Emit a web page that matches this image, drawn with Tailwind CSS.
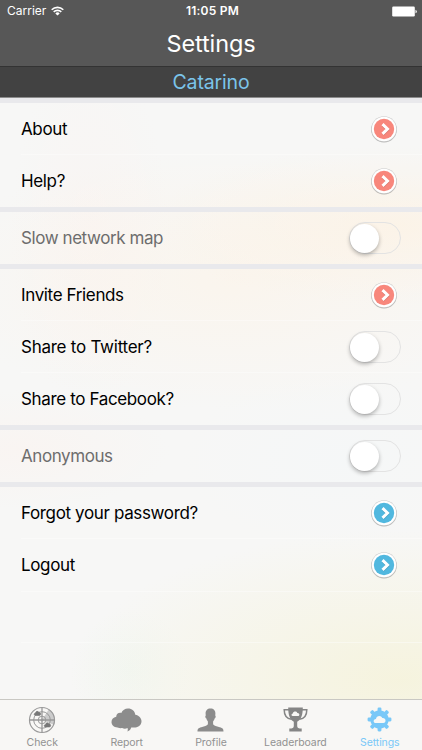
<!DOCTYPE html>
<html lang="en">
<head>
<meta charset="utf-8">
<title>Settings</title>
<script src="https://cdn.jsdelivr.net/npm/@tailwindcss/browser@4"></script>
</head>
<body class="w-[422px] h-[750px] overflow-hidden font-['Inter','Liberation_Sans',sans-serif] text-black">
<svg class="hidden">
  <symbol id="go" viewBox="0 0 28 28">
    <circle cx="14" cy="14.7" r="12.8" fill="#000" opacity=".25"/>
    <circle cx="14" cy="14" r="12.8" fill="#ccc"/>
    <circle cx="14" cy="14" r="12.2" fill="#fff"/>
    <circle cx="14" cy="14" r="10.2" fill="currentColor"/>
    <path d="M12.500 9.400l4.900 4.600-4.900 4.600" transform="translate(.3 .8)" fill="none" stroke="#000" stroke-opacity=".15" stroke-width="3"/>
    <path d="M12.500 9.200l5 4.800-5 4.800" fill="none" stroke="#fff" stroke-width="3"/>
  </symbol>
</svg>
<div class="flex h-full flex-col bg-[#f7f7f6] bg-[radial-gradient(ellipse_250px_80px_at_400px_225px,rgba(255,240,220,.5),transparent),radial-gradient(ellipse_300px_130px_at_230px_280px,rgba(253,243,230,.55),transparent),radial-gradient(ellipse_80px_180px_at_90px_230px,rgba(255,238,234,.25),transparent),radial-gradient(ellipse_150px_60px_at_20px_450px,rgba(253,240,234,.35),transparent),radial-gradient(ellipse_160px_90px_at_340px_460px,rgba(243,247,249,.5),transparent),radial-gradient(ellipse_330px_150px_at_400px_680px,rgba(245,242,214,.75),transparent),radial-gradient(ellipse_60px_60px_at_130px_670px,rgba(237,246,240,.5),transparent)]">
  <header class="h-[66px] shrink-0 bg-[#575757] text-white">
    <div class="grid h-[22px] grid-cols-3 items-center pl-[7px] pr-[5px]">
      <div class="flex items-center gap-[5px] text-[12px]">
        <span>Carrier</span>
        <svg class="h-[10px] w-[13px]" viewBox="0 0 13 10" fill="none" stroke="#fff" stroke-width="1.6"><path d="M.7 3.700a8.300 8.300 0 0 1 11.600 0M2.700 5.900a5.400 5.400 0 0 1 7.600 0"/><path d="M6.500 9.500L4.300 7.400a3.100 3.100 0 0 1 4.400 0z" fill="#fff" stroke="none"/></svg>
      </div>
      <div class="pl-px text-center text-[12px] font-semibold tracking-[.2px]">11:05 PM</div>
      <svg class="h-[11px] w-[25px] justify-self-end" viewBox="0 0 25 11" fill="#fff"><rect x=".2" y=".5" width="22.600" height="10" rx="1.200"/><path d="M23.500 3.700q1.300.4 1.300 1.800t-1.300 1.800z"/></svg>
    </div>
    <h1 class="pt-px text-center text-[23.5px] leading-[42px] tracking-[-.1px]">Settings</h1>
  </header>
  <div class="h-[32px] shrink-0 border-t border-b border-t-[#333] border-b-[#8c8c8c] bg-[#424242] text-center text-[19.500px] leading-[31px] tracking-[-.15px] text-[#7bc4ea]">Catarino</div>
  <main class="flex flex-1 flex-col text-[17px] tracking-[-.36px]">
    <div class="h-[5px] shrink-0 bg-[#e9e9ec]"></div>
    <section>
      <div class="flex h-[52px] items-center justify-between pl-[21px] pr-[24px]"><span class="pt-[2px]">About</span><svg class="size-7 text-[#f8877c]"><use href="#go"/></svg></div>
      <div class="ml-[21px] flex h-[52px] items-center justify-between pr-[24px] shadow-[0_-1px_0_rgba(255,255,255,.35)]"><span class="pt-[2px]">Help?</span><svg class="size-7 text-[#f8877c]"><use href="#go"/></svg></div>
    </section>
    <div class="h-[5px] shrink-0 bg-[#e9e9ec]"></div>
    <section>
      <div class="flex h-[52px] items-center justify-between pl-[21px] pr-[21px] text-[#6d6d6d]"><span class="pt-[2px] tracking-[-.42px]">Slow network map</span><span class="flex h-[32px] w-[52px] items-center rounded-full border-[1.5px] border-[#e3e3e3]"><span class="size-[29px] rounded-full bg-white shadow-[0_2px_4px_rgba(0,0,0,.3)]"></span></span></div>
    </section>
    <div class="h-[5px] shrink-0 bg-[#e9e9ec]"></div>
    <section>
      <div class="flex h-[52px] items-center justify-between pl-[21px] pr-[24px]"><span class="pt-[2px]">Invite Friends</span><svg class="size-7 text-[#f8877c]"><use href="#go"/></svg></div>
      <div class="ml-[21px] flex h-[52px] items-center justify-between pr-[21px] shadow-[0_-1px_0_rgba(255,255,255,.35)]"><span class="pt-[2px] tracking-[-.25px]">Share to Twitter?</span><span class="flex h-[32px] w-[52px] items-center rounded-full border-[1.5px] border-[#e3e3e3]"><span class="size-[29px] rounded-full bg-white shadow-[0_2px_4px_rgba(0,0,0,.3)]"></span></span></div>
      <div class="ml-[21px] flex h-[52px] items-center justify-between pr-[21px] shadow-[0_-1px_0_rgba(255,255,255,.35)]"><span class="pt-[2px]">Share to Facebook?</span><span class="flex h-[32px] w-[52px] items-center rounded-full border-[1.5px] border-[#e3e3e3]"><span class="size-[29px] rounded-full bg-white shadow-[0_2px_4px_rgba(0,0,0,.3)]"></span></span></div>
    </section>
    <div class="h-[5px] shrink-0 bg-[#e9e9ec]"></div>
    <section>
      <div class="flex h-[52px] items-center justify-between pl-[21px] pr-[21px] text-[#6d6d6d]"><span class="pt-[2px] tracking-[-.42px]">Anonymous</span><span class="flex h-[32px] w-[52px] items-center rounded-full border-[1.5px] border-[#e3e3e3]"><span class="size-[29px] rounded-full bg-white shadow-[0_2px_4px_rgba(0,0,0,.3)]"></span></span></div>
    </section>
    <div class="h-[5px] shrink-0 bg-[#e9e9ec]"></div>
    <section>
      <div class="flex h-[52px] items-center justify-between pl-[21px] pr-[24px]"><span class="pt-[2px]">Forgot your password?</span><svg class="size-7 text-[#51b8df]"><use href="#go"/></svg></div>
      <div class="ml-[21px] flex h-[52px] items-center justify-between pr-[24px] shadow-[0_-1px_0_rgba(255,255,255,.35)]"><span class="pt-[2px]">Logout</span><svg class="size-7 text-[#51b8df]"><use href="#go"/></svg></div>
      <div class="ml-[21px] h-[52px] border-y border-white/40"></div>
    </section>
  </main>
  <nav class="grid h-[51px] shrink-0 grid-cols-5 border-t border-[#c9c8c3] bg-[#f8f7f5] text-[10.5px] tracking-[-.1px] text-[#929292]">
    <div class="flex flex-col items-center">
      <svg class="mt-[6px] mb-px h-[28px] w-[28px]" viewBox="0 0 28 28" fill="none" stroke="#999">
        <path d="M14 14L21 3A13 13 0 0 1 26 19z" fill="#ccc" stroke="none"/>
        <circle cx="14" cy="14" r="12.500" stroke-width="1.200"/><circle cx="14" cy="14" r="8.300"/><circle cx="14" cy="14" r="3.800"/><circle cx="14" cy="14" r="1" fill="#8e8e8e"/>
        <path d="M14 1.500v25M1.500 14h25" stroke-width="1.300"/>
        <path d="M7.500 9.500c-1.800-.2-1.800-2.300 0-2.500.3-2 2.900-2.200 3.400-.4 2.200-.3 2.500 2.700.5 2.900zM17.500 21c-1.800-.2-1.800-2.300 0-2.500.3-2 2.900-2.200 3.400-.4 2.200-.3 2.500 2.700.5 2.900z" fill="#777" stroke="#777" stroke-width=".6"/>
      </svg>
      <span class="leading-[16px]">Check</span>
    </div>
    <div class="flex flex-col items-center">
      <svg class="mt-[8px] mb-[3px] h-[24px] w-[31px]" viewBox="0 0 31 24" fill="#8c8c8c"><path d="M6.500 19.500C2.800 19.300.5 17 .5 14c0-2.900 1.900-4.800 4.700-5.300C5.300 6 7.500 4.300 10.300 4.900 11.500 2.200 14 .6 17 .6c4 0 6.700 2.400 7.300 6.100 3.500.6 6.200 3.200 6.200 6.600 0 3.400-2.700 6-6 6.100h-4.300c-.4 1.800-1.700 3.200-3.800 4 .5-1.200.5-2.400.1-3.400-1.800.9-3.700.8-5.300 0-1.500.3-3 .1-4.700-.5z"/></svg>
      <span class="leading-[16px]">Report</span>
    </div>
    <div class="flex flex-col items-center">
      <svg class="mt-[8px] mb-[3px] h-[24px] w-[27px]" viewBox="0 0 27 24" fill="#8c8c8c"><path d="M13.500.5c3.200 0 5 2.100 4.900 5.100 0 .7-.1 1.300-.2 1.900.9.200.5 2.700-.6 3-.3 1.400-.9 2.200-1.500 2.900v2.300c0 1.200 1 1.700 2.500 2.200l4.200 1.300c3 .9 3.700 1.800 3.700 4.300H.5c0-2.500.7-3.400 3.700-4.300l4.200-1.300c1.500-.5 2.500-1 2.500-2.200v-2.300c-.6-.7-1.200-1.500-1.500-2.900-1.100-.3-1.500-2.800-.6-3-.1-.6-.2-1.200-.2-1.900C8.500 2.600 10.300.5 13.500.5z"/></svg>
      <span class="leading-[16px] tracking-[-.05px]">Profile</span>
    </div>
    <div class="flex flex-col items-center">
      <svg class="mt-[7px] mb-[3px] h-[25px] w-[25px]" viewBox="0 0 25 25"><path d="M6 2.700H1.200c0 5.600 2.600 9 7.300 9.500M19 2.700h4.800c0 5.600-2.600 9-7.300 9.500" fill="none" stroke="#858585" stroke-width="1.500"/><path d="M5.200.5h14.600c0 7.300-1.600 12.200-5.600 14.200v4.300c0 1.800 1.300 2.500 4.500 2.600V24.500H6.300V21.600c3.200-.1 4.500-.8 4.500-2.600v-4.300C6.800 12.700 5.200 7.800 5.200.5z" fill="#858585"/><path d="M9.800 9.100c-1.700-.2-1.700-2.300 0-2.600.4-2.300 3.800-2.500 4.500-.6 2.400-.3 2.900 2.900.7 3.200z" fill="#f8f7f5"/></svg>
      <span class="leading-[16px]">Leaderboard</span>
    </div>
    <div class="flex flex-col items-center text-[#79c8f8]">
      <svg class="mt-[7px] mb-[3px] h-[25px] w-[25px]" viewBox="0 0 26 26" fill="#79c8f8"><circle cx="13" cy="13" r="9.600"/><g id="teeth"><rect x="11" y=".6" width="4" height="24.800" rx="1.200"/><rect x=".6" y="11" width="24.800" height="4" rx="1.200"/></g><use href="#teeth" transform="rotate(45 13 13)"/><path d="M9.300 16.700c-3.200-.3-3.200-3.900 0-4.300.4-3.800 5.600-4.100 6.600-1 4-.5 4.700 4.900 1 5.300z" fill="#f9f8f6"/></svg>
      <span class="leading-[16px]">Settings</span>
    </div>
  </nav>
</div>
</body>
</html>
